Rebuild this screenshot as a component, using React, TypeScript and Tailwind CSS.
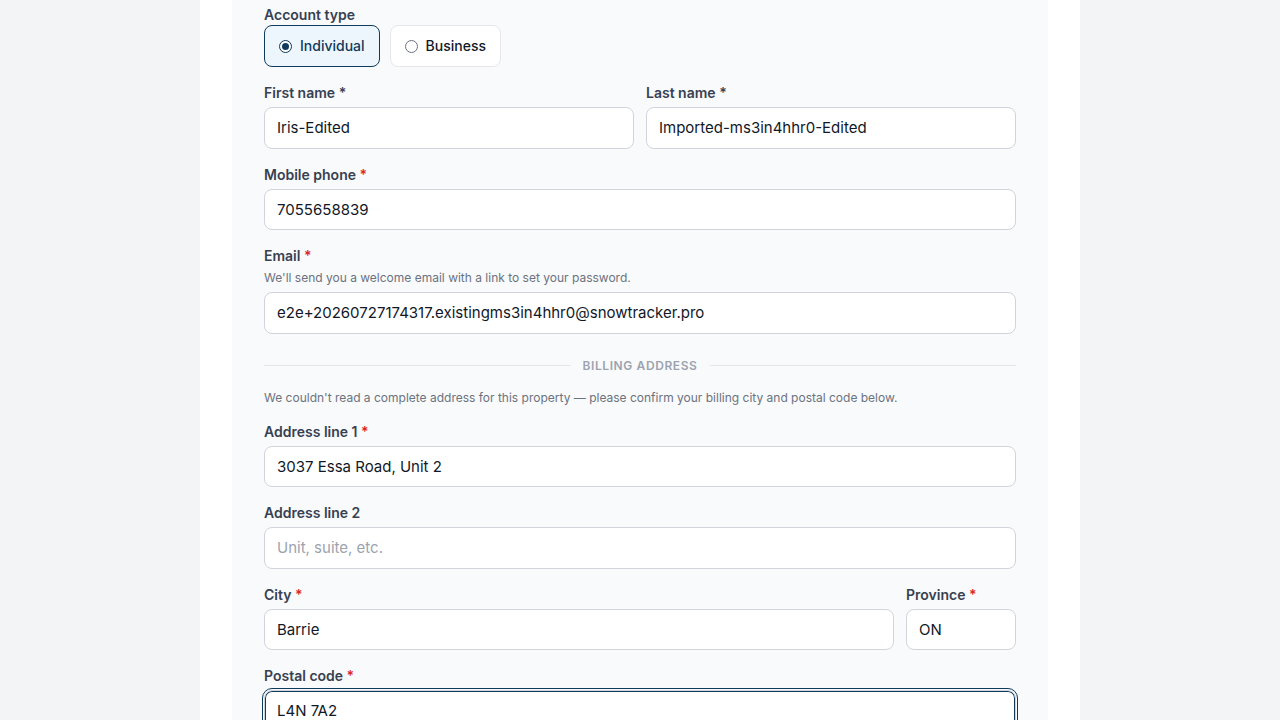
import React, { useState } from 'react';

const FONT = { fontFamily: 'Inter, "Noto Sans", "Liberation Sans", sans-serif' };

const inputBase =
  'block w-full h-[41.5px] rounded-lg border border-[#d1d5db] bg-white px-3 text-[15px] text-[#111827] placeholder:text-[#9ca3af] outline-none';

interface FieldProps {
  label: string;
  required?: boolean;
  hint?: string;
  children: React.ReactNode;
}

const Field: React.FC<FieldProps> = ({ label, required, hint, children }) => (
  <div>
    <label className="block text-sm leading-5 font-semibold text-[#374151] mb-1">
      {label}
      {required && <span className="text-[#dc2626]"> *</span>}
    </label>
    {hint && <p className="text-xs leading-4 text-[#6b7280] mb-1.5">{hint}</p>}
    {children}
  </div>
);

const App: React.FC = () => {
  const [accountType, setAccountType] = useState<'individual' | 'business'>('individual');
  const [form, setForm] = useState({
    firstName: 'Iris-Edited',
    lastName: 'Imported-ms3in4hhr0-Edited',
    phone: '7055658839',
    email: 'e2e+20260727174317.existingms3in4hhr0@snowtracker.pro',
    address1: '3037 Essa Road, Unit 2',
    address2: '',
    city: 'Barrie',
    province: 'ON',
    postal: 'L4N 7A2',
  });

  const update = (key: keyof typeof form) => (e: React.ChangeEvent<HTMLInputElement>) =>
    setForm({ ...form, [key]: e.target.value });

  const options = [
    { id: 'individual' as const, label: 'Individual' },
    { id: 'business' as const, label: 'Business' },
  ];

  return (
    <div className="min-h-screen bg-[#f3f4f6]" style={FONT}>
      <div className="mx-auto w-[880px] bg-white px-8">
        <div className="bg-[#f9fafb] px-8 pt-[5px] pb-10">
          <div className="space-y-4">
            <div>
              <p className="text-sm leading-5 font-semibold text-[#374151]">Account type</p>
              <div className="flex gap-2.5">
                {options.map((opt) => {
                  const active = accountType === opt.id;
                  return (
                    <button
                      key={opt.id}
                      type="button"
                      onClick={() => setAccountType(opt.id)}
                      className={`flex items-center gap-2 h-[42px] rounded-lg border px-3.5 text-sm font-medium ${
                        active
                          ? 'border-[#0f3a5c] bg-[#eef6fd] text-[#0f3a5c]'
                          : 'border-[#e5e7eb] bg-white text-[#111827]'
                      }`}
                    >
                      <span
                        className={`flex h-[13px] w-[13px] items-center justify-center rounded-full border ${
                          active ? 'border-[#0f3a5c] bg-white' : 'border-[#6b7280] bg-white'
                        }`}
                      >
                        {active && <span className="h-[7px] w-[7px] rounded-full bg-[#0f3a5c]" />}
                      </span>
                      {opt.label}
                    </button>
                  );
                })}
              </div>
            </div>

            <div className="grid grid-cols-2 gap-3">
              <Field label="First name *">
                <input className={inputBase} value={form.firstName} onChange={update('firstName')} />
              </Field>
              <Field label="Last name *">
                <input className={inputBase} value={form.lastName} onChange={update('lastName')} />
              </Field>
            </div>

            <Field label="Mobile phone" required>
              <input className={inputBase} value={form.phone} onChange={update('phone')} />
            </Field>

            <Field label="Email" required hint="We'll send you a welcome email with a link to set your password.">
              <input className={inputBase} value={form.email} onChange={update('email')} />
            </Field>

            <div className="flex items-center gap-3 pt-2">
              <div className="h-px flex-1 bg-[#e5e7eb]" />
              <span className="text-xs leading-4 font-semibold tracking-wider text-[#9ca3af]">BILLING ADDRESS</span>
              <div className="h-px flex-1 bg-[#e5e7eb]" />
            </div>

            <p className="text-xs leading-4 text-[#6b7280]">
              We couldn't read a complete address for this property — please confirm your billing city and postal code below.
            </p>

            <Field label="Address line 1" required>
              <input className={inputBase} value={form.address1} onChange={update('address1')} />
            </Field>

            <Field label="Address line 2">
              <input
                className={inputBase}
                placeholder="Unit, suite, etc."
                value={form.address2}
                onChange={update('address2')}
              />
            </Field>

            <div className="grid grid-cols-[1fr_110px] gap-3">
              <Field label="City" required>
                <input className={inputBase} value={form.city} onChange={update('city')} />
              </Field>
              <Field label="Province" required>
                <input className={inputBase} value={form.province} onChange={update('province')} />
              </Field>
            </div>

            <Field label="Postal code" required>
              <input
                className={`${inputBase} border-[#0f3a5c] shadow-[inset_0_0_0_1px_#0f3a5c] outline-1 outline-offset-1 outline-[#0f3a5c]`}
                style={{ outlineStyle: 'solid' }}
                value={form.postal}
                onChange={update('postal')}
              />
            </Field>
          </div>
        </div>
      </div>
    </div>
  );
};

export default App;
